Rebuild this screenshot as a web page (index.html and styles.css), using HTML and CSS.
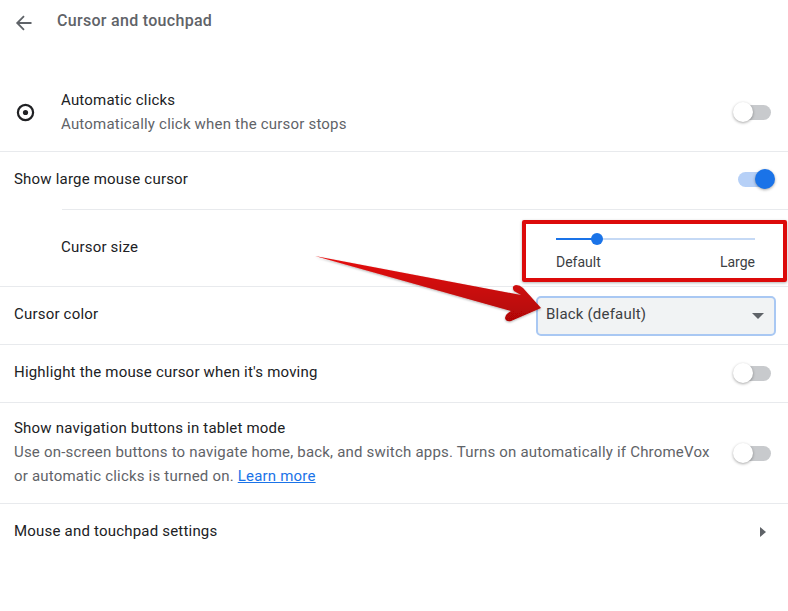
FILE: index.html
```html
<!DOCTYPE html>
<html lang="en">
<head>
<meta charset="utf-8">
<title>Cursor and touchpad</title>
<link rel="stylesheet" href="styles.css">
</head>
<body>

<div class="page">
  <!-- header -->
  <div class="head">
    <svg class="back" width="20" height="20" viewBox="0 0 20 20"><path d="M17.5 10H3.5M10 3.2 3.2 10 10 16.8" fill="none" stroke="#5f6368" stroke-width="1.8"/></svg>
    <h1>Cursor and touchpad</h1>
  </div>

  <div class="row row-auto">
    <svg class="dot-icon" width="20" height="20" viewBox="0 0 20 20"><circle cx="9.500" cy="9.500" r="7.600" fill="none" stroke="#202124" stroke-width="2.200"/><circle cx="9.500" cy="9.500" r="2.600" fill="#202124"/></svg>
    <div class="txt">
      <div class="label">Automatic clicks</div>
      <div class="sub">Automatically click when the cursor stops</div>
    </div>
    <span class="toggle"></span>
  </div>

  <div class="row row-large">
    <div class="txt"><div class="label">Show large mouse cursor</div></div>
    <span class="toggle on"></span>
  </div>

  <div class="row row-size">
    <div class="txt"><div class="label">Cursor size</div></div>
    <div class="slider">
      <div class="track"><span class="fill"></span><span class="knob"></span></div>
      <div class="ends"><span>Default</span><span>Large</span></div>
    </div>
  </div>

  <div class="row row-color">
    <div class="txt"><div class="label">Cursor color</div></div>
    <div class="select">Black (default)<span class="caret"></span></div>
  </div>

  <div class="row row-high">
    <div class="txt"><div class="label">Highlight the mouse cursor when it's moving</div></div>
    <span class="toggle"></span>
  </div>

  <div class="row row-nav">
    <div class="txt">
      <div class="label">Show navigation buttons in tablet mode</div>
      <div class="sub">Use on-screen buttons to navigate home, back, and switch apps. Turns on automatically if ChromeVox or automatic clicks is turned on. <a href="#">Learn more</a></div>
    </div>
    <span class="toggle"></span>
  </div>

  <div class="row row-link">
    <div class="txt"><div class="label">Mouse and touchpad settings</div></div>
    <span class="arrow-right"></span>
  </div>
</div>

<!-- annotations on top of the screenshot -->
<div class="redbox"></div>
<svg class="pointer" width="788" height="611" viewBox="0 0 788 611">
  <defs>
    <linearGradient id="redfill" x1="0" y1="0" x2="0" y2="1">
      <stop offset="0" stop-color="#e60c0c"/>
      <stop offset="1" stop-color="#b00606"/>
    </linearGradient>
    <filter id="soft" x="-10%" y="-30%" width="120%" height="160%">
      <feDropShadow dx="0" dy="1" stdDeviation="1" flood-color="#000" flood-opacity=".3"/>
    </filter>
  </defs>
  <path d="M315 256 L521 295 L514 291 Q511 286 516 285 Q520 285 523 288 L541 308 L511 321 Q506 322 505 318 Q505 315 508 313 L511 311 Z" fill="url(#redfill)" filter="url(#soft)"/>
</svg>

</body>
</html>
```

FILE: styles.css
```css
*{box-sizing:border-box;margin:0;padding:0}
html,body{height:100%}
body{
  font-family:'Roboto',sans-serif;
  background:#fff;
  color:#202124;
  overflow:hidden;
  position:relative;
}
.page{width:788px}

/* --------- header --------- */
.head{
  height:70px;
  display:flex;
  align-items:flex-start;
  padding:13px 0 0 14px;
}
h1{
  font-size:16px;
  font-weight:500;
  letter-spacing:.3px;
  color:#5f6368;
  margin:-1px 0 0 23px;
  line-height:18px;
}

/* --------- rows --------- */
.row{
  display:flex;
  align-items:center;
  justify-content:space-between;
  padding:0 14px;
  border-bottom:1px solid #e8eaed;
  position:relative;
}
.txt{flex:1;min-width:0;margin-bottom:2px}
.label{font-size:15px;line-height:24px;letter-spacing:.2px}
.sub{font-size:15px;line-height:24px;color:#5f6368;letter-spacing:.2px}
.sub a{color:#1a73e8;text-decoration:underline}

.row-auto{height:82px;padding-left:16px;padding-top:4px}
.dot-icon{margin-right:25px}
.row-large{height:57px;border-bottom:0;padding-bottom:2px}
.row-size{height:78px}
.row-size::before{
  content:"";
  position:absolute;
  left:62px;right:0;top:0;
  border-top:1px solid #e8eaed;
}
.row-size .txt{padding-left:47px}
.row-color{height:58px}
.row-color .txt{margin-bottom:4px}
.row-high{height:58px}
.row-high .txt{margin-bottom:3px}
.row-nav{height:101px}
.row-nav .txt{flex:none;width:702px}
.row-link{height:56px;border-bottom:0}

/* --------- toggle --------- */
.toggle{
  display:block;
  flex:none;
  width:36px;
  height:15px;
  border-radius:8px;
  background:#c8cacd;
  position:relative;
  margin-right:3px;
}
.toggle::after{
  content:"";
  position:absolute;
  left:-2px;top:-3px;
  width:20px;height:20px;
  border-radius:50%;
  background:#fff;
  box-shadow:0 1px 3px rgba(0,0,0,.35);
}
.toggle.on{background:#b6d0f7;margin-right:0}
.toggle.on::after{left:auto;right:-1px;background:#1a73e8}

/* --------- slider --------- */
.slider{width:199px;margin-right:19px;padding-top:14px}
.track{
  height:2px;
  background:#c5d9f5;
  position:relative;
}
.fill{position:absolute;left:0;top:0;height:2px;width:40px;background:#1a73e8}
.knob{
  position:absolute;
  left:35px;top:-5px;
  width:12px;height:12px;
  border-radius:50%;
  background:#1a73e8;
}
.ends{
  display:flex;
  justify-content:space-between;
  font-size:14px;
  line-height:18px;
  margin-top:13px;
  color:#3c4043;
}

/* --------- select --------- */
.select{
  width:240px;
  height:40px;
  margin-right:-2px;
  background:#f1f3f4;
  border:2px solid #a9c8f3;
  border-radius:5px;
  font-size:15px;
  letter-spacing:.2px;
  line-height:33px;
  padding-left:8px;
  position:relative;
  color:#3c4043;
}
.caret{
  position:absolute;
  right:10px;top:15px;
  border-left:6px solid transparent;
  border-right:6px solid transparent;
  border-top:6px solid #5f6368;
}

.arrow-right{
  width:0;height:0;
  border-top:5px solid transparent;
  border-bottom:5px solid transparent;
  border-left:6px solid #5f6368;
  margin-right:8px;
}

/* --------- red annotations --------- */
.redbox{
  position:absolute;
  left:522px;top:220px;
  width:265px;height:62px;
  border:4px solid #dc0a0a;
  border-radius:2px;
  box-shadow:0 1px 3px rgba(0,0,0,.3);
}
.pointer{position:absolute;left:0;top:0}
```
